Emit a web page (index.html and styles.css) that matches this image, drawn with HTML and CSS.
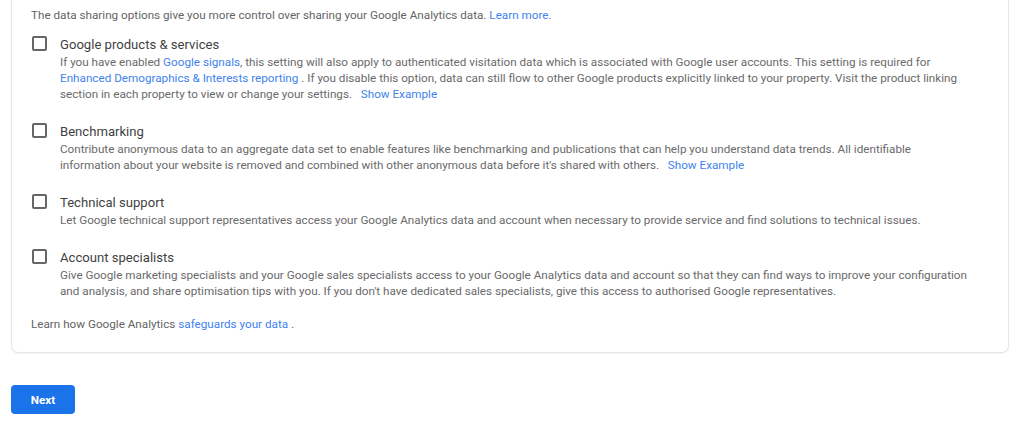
FILE: index.html
```html
<!DOCTYPE html>
<html lang="en">
<head>
<meta charset="utf-8">
<link rel="stylesheet" href="styles.css">
</head>
<body>
<div class="page">
  <div class="card">
    <p class="intro">The data sharing options give you more control over sharing your Google Analytics data. <a href="#">Learn more.</a></p>

    <div class="option">
      <span class="checkbox"></span>
      <div class="option-text">
        <div class="title">Google products &amp; services</div>
        <div class="desc">If you have enabled <a href="#">Google signals</a>, this setting will also apply to authenticated visitation data which is associated with Google user accounts. This setting is required for <a href="#">Enhanced Demographics &amp; Interests reporting</a> . If you disable this option, data can still flow to other Google products explicitly linked to your property. Visit the product linking section in each property to view or change your settings. &nbsp; <a href="#">Show Example</a></div>
      </div>
    </div>

    <div class="option">
      <span class="checkbox"></span>
      <div class="option-text">
        <div class="title">Benchmarking</div>
        <div class="desc">Contribute anonymous data to an aggregate data set to enable features like benchmarking and publications that can help you understand data trends. All identifiable information about your website is removed and combined with other anonymous data before it's shared with others. &nbsp; <a href="#">Show Example</a></div>
      </div>
    </div>

    <div class="option">
      <span class="checkbox"></span>
      <div class="option-text">
        <div class="title">Technical support</div>
        <div class="desc">Let Google technical support representatives access your Google Analytics data and account when necessary to provide service and find solutions to technical issues.</div>
      </div>
    </div>

    <div class="option">
      <span class="checkbox"></span>
      <div class="option-text">
        <div class="title">Account specialists</div>
        <div class="desc">Give Google marketing specialists and your Google sales specialists access to your Google Analytics data and account so that they can find ways to improve your configuration and analysis, and share optimisation tips with you. If you don't have dedicated sales specialists, give this access to authorised Google representatives.</div>
      </div>
    </div>

    <p class="footer">Learn how Google Analytics <a href="#">safeguards your data</a> .</p>
  </div>

  <button class="next" type="button">Next</button>
</div>
</body>
</html>
```

FILE: styles.css
```css
html, body {
  margin: 0;
  padding: 0;
  background: #ffffff;
}

body {
  font-family: Roboto, "Liberation Sans", Arial, sans-serif;
  color: #6a6a6a;
}

a {
  color: #4282ee;
  text-decoration: none;
}

.page {
  padding: 0 15px 0 11px;
}

.card {
  border: 1px solid #e6e6e6;
  border-top: none;
  border-radius: 0 0 7px 7px;
  box-shadow: 0 1px 1px rgba(0, 0, 0, 0.05);
  padding: 7px 38px 20px 19px;
}

.intro {
  margin: 0 0 13px 0;
  font-size: 11.7px;
  line-height: 16px;
  color: #646464;
}

.option {
  display: flex;
  align-items: flex-start;
  margin-bottom: 21px;
}

.option:last-of-type {
  margin-bottom: 0;
}

.checkbox {
  flex: none;
  box-sizing: border-box;
  width: 15px;
  height: 15px;
  margin: 0 13px 0 1px;
  border: 2px solid #666666;
  border-radius: 2px;
}

.option-text {
  flex: 1;
  min-width: 0;
}

.title {
  font-size: 13.1px;
  line-height: 18px;
  color: #3f3f3f;
}

.desc {
  font-size: 11.7px;
  line-height: 16px;
  color: #6a6a6a;
}

.footer {
  margin: 17px 0 0 0;
  font-size: 11.7px;
  line-height: 16px;
  color: #646464;
}

.next {
  display: block;
  margin-top: 32px;
  width: 64px;
  height: 29px;
  padding: 0;
  border: none;
  border-radius: 4px;
  background: #1a73e8;
  color: #ffffff;
  font-family: Roboto, "Liberation Sans", Arial, sans-serif;
  font-size: 11.7px;
  font-weight: 700;
}
```
